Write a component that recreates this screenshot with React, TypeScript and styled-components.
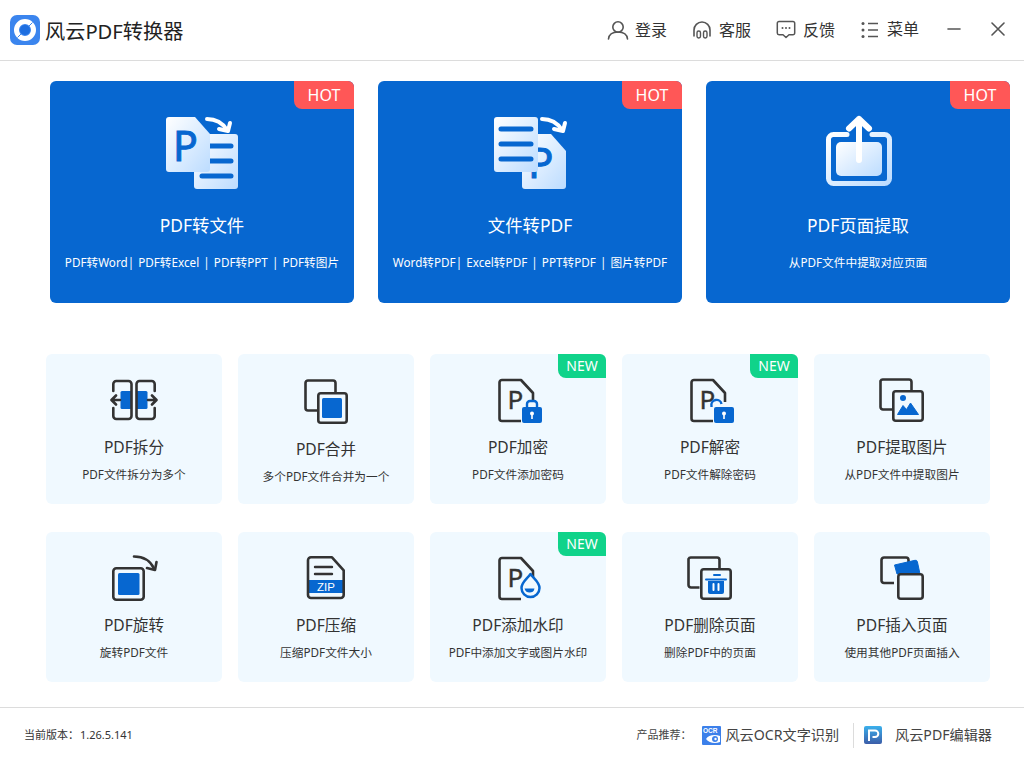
import React from "react";
import styled, { createGlobalStyle } from "styled-components";

const BLUE = "#0767d0";
const INK = "#333333";

const GlobalStyle = createGlobalStyle`
  html, body {
    margin: 0;
    padding: 0;
    background: #fff;
  }
  body {
    font-family: "Noto Sans", "Noto Sans CJK SC", sans-serif;
    color: ${INK};
  }
`;

const DocOutline = () => (
  <>
    <path
      d="M27 45H8a2.5 2.5 0 0 1-2.5-2.5V6.5A2.5 2.5 0 0 1 8 4h19l12 13v9"
      fill="none"
      stroke={INK}
      strokeWidth="2.6"
      strokeLinejoin="round"
    />
    <text x="13.5" y="33" fontSize="26" fill={INK} stroke={INK} strokeWidth="0.4" fontFamily="Noto Sans, sans-serif">
      P
    </text>
  </>
);

const BigGradient = ({ id }: { id: string }) => (
  <defs>
    <linearGradient id={id} x1="0" y1="0" x2="1" y2="1">
      <stop offset="0" stopColor="#ffffff" />
      <stop offset="1" stopColor="#bcdcff" />
    </linearGradient>
  </defs>
);

const BigArrow = ({ x }: { x: number }) => (
  <g transform={`translate(${x} 0)`} fill="none" stroke="#fff" strokeWidth="4" strokeLinecap="round" strokeLinejoin="round">
    <path d="M2 6c8 0 15 3 20 11" />
    <path d="M14 16l9 2 2-8" />
  </g>
);

const PdfToFileIcon = () => (
  <svg width="80" height="80" viewBox="0 0 80 80">
    <BigGradient id="pf" />
    <BigArrow x={43} />
    <rect x="32" y="21" width="44" height="55" rx="3" fill="url(#pf)" />
    <path d="M40 33h29M48 48h21M40 63h29" stroke={BLUE} strokeWidth="5" strokeLinecap="round" />
    <path d="M7 4h26l15 17v35a3 3 0 0 1-3 3H7a3 3 0 0 1-3-3V7a3 3 0 0 1 3-3z" fill="url(#pf)" />
    <text x="11" y="48" fontSize="41" fill={BLUE} stroke={BLUE} strokeWidth="1" fontFamily="Noto Sans, sans-serif">
      P
    </text>
  </svg>
);

const FileToPdfIcon = () => (
  <svg width="80" height="80" viewBox="0 0 80 80">
    <BigGradient id="fp" />
    <BigArrow x={50} />
    <path d="M35 21h26l15 17v35a3 3 0 0 1-3 3H35a3 3 0 0 1-3-3V24a3 3 0 0 1 3-3z" fill="url(#fp)" />
    <text x="38" y="65" fontSize="42" fill={BLUE} stroke={BLUE} strokeWidth="1" fontFamily="Noto Sans, sans-serif">
      P
    </text>
    <rect x="4" y="4" width="44" height="55" rx="3" fill="url(#fp)" />
    <path d="M11 16h30M11 31h30M11 46h30" stroke={BLUE} strokeWidth="5" strokeLinecap="round" />
  </svg>
);

const ExtractPageIcon = () => (
  <svg width="80" height="80" viewBox="0 0 80 80">
    <BigGradient id="ep" />
    <path
      d="M29 21.500H15.500a5 5 0 0 0-5 5V65.500a5 5 0 0 0 5 5H66.500a5 5 0 0 0 5-5V26.500a5 5 0 0 0-5-5H54"
      fill="none"
      stroke="url(#ep)"
      strokeWidth="5"
      strokeLinecap="round"
    />
    <rect x="18" y="29" width="46" height="34" rx="5" fill="url(#ep)" />
    <path d="M41 47V6M31 15.500L41 6l10 9.500" fill="none" stroke="#fff" strokeWidth="6" strokeLinecap="round" strokeLinejoin="round" />
  </svg>
);

const SplitIcon = () => (
  <svg width="48" height="48" viewBox="0 0 48 48">
    <rect x="10.500" y="15" width="11.500" height="18" rx="1.500" fill={BLUE} />
    <rect x="26" y="15" width="11.500" height="18" rx="1.500" fill={BLUE} />
    <g fill="none" stroke={INK} strokeWidth="2.600" strokeLinecap="round" strokeLinejoin="round">
      <path d="M3.300 15V8a3 3 0 0 1 3-3H18.500a3 3 0 0 1 3 3V40a3 3 0 0 1-3 3H6.300a3 3 0 0 1-3-3V32" />
      <path d="M44.700 15V8a3 3 0 0 0-3-3H29.500a3 3 0 0 0-3 3V40a3 3 0 0 0 3 3H41.700a3 3 0 0 0 3-3V32" />
      <path d="M10 24H2M6 19.500L1.500 24 6 28.500" />
      <path d="M38 24h8M42 19.500L46.500 24 42 28.500" />
    </g>
  </svg>
);

const MergeIcon = () => (
  <svg width="48" height="48" viewBox="0 0 48 48">
    <g fill="none" stroke={INK} strokeWidth="2.600">
      <path d="M15 34.500H6a2.500 2.500 0 0 1-2.500-2.500V7A2.500 2.500 0 0 1 6 4.500H31A2.500 2.500 0 0 1 33.500 7v9" />
      <rect x="16.300" y="17.300" width="28.400" height="29.400" rx="2.500" />
    </g>
    <rect x="20" y="22" width="20" height="20" rx="1.500" fill={BLUE} />
  </svg>
);

const LockBody = () => (
  <>
    <rect x="28" y="31" width="20" height="16" rx="2" fill={BLUE} />
    <circle cx="38" cy="37.500" r="2" fill="#fff" />
    <rect x="37.200" y="38" width="1.600" height="5" fill="#fff" />
  </>
);

const EncryptIcon = () => (
  <svg width="48" height="48" viewBox="0 0 48 48">
    <DocOutline />
    <path d="M33 31v-3a3 3 0 0 1 3-3h4a3 3 0 0 1 3 3v3" fill="#f0f9ff" stroke={BLUE} strokeWidth="2.400" />
    <LockBody />
  </svg>
);

const DecryptIcon = () => (
  <svg width="48" height="48" viewBox="0 0 48 48">
    <DocOutline />
    <path d="M25.500 31v-1a5 5 0 0 1 10-2" fill="none" stroke={BLUE} strokeWidth="2.400" />
    <LockBody />
  </svg>
);

const ExtractImageIcon = () => (
  <svg width="48" height="48" viewBox="0 0 48 48">
    <g fill="none" stroke={INK} strokeWidth="2.600">
      <path d="M14 33.500H5a2.500 2.500 0 0 1-2.500-2.500V5A2.500 2.500 0 0 1 5 3.500H31A2.500 2.500 0 0 1 33.500 6v9" />
      <rect x="15.300" y="15.300" width="29.400" height="29.400" rx="2.500" />
    </g>
    <circle cx="25" cy="22" r="3" fill={BLUE} />
    <path d="M19.500 38.500l5.500-9 3.500 4 4-6.500 8 11.500z" fill={BLUE} stroke={BLUE} strokeLinejoin="round" />
  </svg>
);

const RotateIcon = () => (
  <svg width="48" height="48" viewBox="0 0 48 48">
    <rect x="3.300" y="14.300" width="30.400" height="31.400" rx="3" fill="none" stroke={INK} strokeWidth="2.600" />
    <rect x="8" y="19" width="21.500" height="22" rx="1.500" fill={BLUE} />
    <path d="M24 2.500c8 0 16 3.500 20 12" fill="none" stroke={INK} strokeWidth="2.600" strokeLinecap="round" />
    <path d="M37 14l8 2 1.500-8" fill="none" stroke={INK} strokeWidth="2.600" strokeLinecap="round" strokeLinejoin="round" />
  </svg>
);

const ZipIcon = () => (
  <svg width="48" height="48" viewBox="0 0 48 48">
    <rect x="6" y="26" width="36" height="13" fill={BLUE} />
    <path
      d="M9 3.300H30l11.700 13V41a3 3 0 0 1-3 3H9a3 3 0 0 1-3-3V6.300a3 3 0 0 1 3-3z"
      fill="none"
      stroke={INK}
      strokeWidth="2.600"
      strokeLinejoin="round"
    />
    <path d="M13 13h17M13 20h17" stroke={INK} strokeWidth="2.400" strokeLinecap="round" />
    <text x="24" y="37" textAnchor="middle" fontSize="11.500" fill="#fff" fontFamily="Liberation Sans, sans-serif">
      ZIP
    </text>
  </svg>
);

const WatermarkIcon = () => (
  <svg width="48" height="48" viewBox="0 0 48 48">
    <DocOutline />
    <path
      d="M36.500 20c3 4.500 9 8 9 14a9 9 0 0 1-18 0c0-6 6-9.500 9-14z"
      fill="#f0f9ff"
      stroke={BLUE}
      strokeWidth="2.500"
      strokeLinejoin="round"
    />
    <path d="M30.500 34.500h10c-.5 3-2.500 4-5 4s-4-1-5-4z" fill={BLUE} />
  </svg>
);

const DeleteIcon = () => (
  <svg width="48" height="48" viewBox="0 0 48 48">
    <g fill="none" stroke={INK} strokeWidth="2.600">
      <path d="M13.500 33.500H5a2.500 2.500 0 0 1-2.500-2.500V5A2.500 2.500 0 0 1 5 3.500H31A2.500 2.500 0 0 1 33.500 6v9" />
      <rect x="15.300" y="15.300" width="29.400" height="29.400" rx="2.500" />
    </g>
    <rect x="27" y="20" width="8" height="2" rx="1" fill={BLUE} />
    <rect x="19" y="24.500" width="22" height="2" rx="1" fill={BLUE} />
    <path d="M22 27h16v11a2 2 0 0 1-2 2H24a2 2 0 0 1-2-2z" fill={BLUE} />
    <path d="M27.500 30v6M32.500 30v6" stroke="#fff" strokeWidth="2" strokeLinecap="round" />
  </svg>
);

const InsertIcon = () => (
  <svg width="48" height="48" viewBox="0 0 48 48">
    <path
      d="M15 28H5a2.500 2.500 0 0 1-2.500-2.500V5A2.500 2.500 0 0 1 5 2.500H27A2.500 2.500 0 0 1 29.500 5v3"
      fill="none"
      stroke={INK}
      strokeWidth="2.600"
      transform="translate(1 1)"
    />
    <path d="M16.500 11l20.500-4.700a2 2 0 0 1 2.400 1.500L42 20H19z" fill={BLUE} stroke={BLUE} strokeLinejoin="round" />
    <rect x="20.300" y="20.300" width="24.400" height="24.400" rx="2.500" fill="#f0f9ff" stroke={INK} strokeWidth="2.600" />
  </svg>
);

const AppLogo = () => (
  <svg width="30" height="30" viewBox="0 0 30 30">
    <rect width="30" height="30" rx="7" fill="#3b85ee" />
    <circle cx="15" cy="15" r="8.500" fill="none" stroke="#fff" strokeWidth="5" />
    <circle cx="15" cy="15" r="5" fill="#1f6fe0" />
    <path d="M19 11l3.500-3.500M11 19l-3.500 3.500" stroke="#3b85ee" strokeWidth="1" />
  </svg>
);

const UserIcon = () => (
  <svg width="22" height="20" viewBox="0 0 22 20">
    <circle cx="11" cy="7" r="5.200" fill="none" stroke="#555" strokeWidth="1.600" />
    <path d="M1.500 19c.5-5 4-7 9.500-7s9 2 9.500 7" fill="none" stroke="#555" strokeWidth="1.600" strokeLinecap="round" />
  </svg>
);

const HeadsetIcon = () => (
  <svg width="20" height="20" viewBox="0 0 20 20">
    <path d="M2 16V10a8 8 0 0 1 16 0v6" fill="none" stroke="#555" strokeWidth="1.600" strokeLinecap="round" />
    <rect x="5" y="11" width="3.500" height="7" rx="1.700" fill="none" stroke="#555" strokeWidth="1.400" />
    <rect x="11.500" y="11" width="3.500" height="7" rx="1.700" fill="none" stroke="#555" strokeWidth="1.400" />
  </svg>
);

const FeedbackIcon = () => (
  <svg width="20" height="20" viewBox="0 0 20 20">
    <path
      d="M3 1.500H17a1.700 1.700 0 0 1 1.700 1.700V13a1.700 1.700 0 0 1-1.700 1.700H13L10 17.500 7 14.700H3A1.700 1.700 0 0 1 1.300 13V3.200A1.700 1.700 0 0 1 3 1.500z"
      fill="none"
      stroke="#555"
      strokeWidth="1.500"
      strokeLinejoin="round"
    />
    <circle cx="6.500" cy="8" r="1" fill="#555" />
    <circle cx="10" cy="8" r="1" fill="#555" />
    <circle cx="13.500" cy="8" r="1" fill="#555" />
  </svg>
);

const MenuIcon = () => (
  <svg width="18" height="18" viewBox="0 0 18 18">
    <circle cx="2" cy="2.500" r="1.500" fill="#555" />
    <circle cx="2" cy="9" r="1.500" fill="#555" />
    <circle cx="2" cy="15.500" r="1.500" fill="#555" />
    <path d="M7 2.500h10M7 9h10M7 15.500h10" stroke="#555" strokeWidth="1.400" />
  </svg>
);

const MinimizeIcon = () => (
  <svg width="14" height="14" viewBox="0 0 14 14">
    <path d="M1 7h12" stroke="#555" strokeWidth="1.600" strokeLinecap="round" />
  </svg>
);

const CloseIcon = () => (
  <svg width="14" height="14" viewBox="0 0 14 14">
    <path d="M1 1l12 12M13 1L1 13" stroke="#555" strokeWidth="1.600" strokeLinecap="round" />
  </svg>
);

const OcrLogo = () => (
  <svg width="19" height="19" viewBox="0 0 19 19">
    <rect width="19" height="19" rx="1" fill="#3c80ea" />
    <text x="1" y="7" fontSize="6.500" fontWeight="700" fill="#fff" fontFamily="Liberation Sans, sans-serif">
      OCR
    </text>
    <path d="M4 13c2-4 9-5 14-3v6c-5 2-11 1-14-3z" fill="#fff" />
    <circle cx="13" cy="13" r="3" fill="#3c80ea" />
    <circle cx="13.500" cy="13" r="1.200" fill="#fff" />
  </svg>
);

const EditorLogo = () => (
  <svg width="18" height="18" viewBox="0 0 18 18">
    <defs>
      <linearGradient id="ed" x1="0" y1="0" x2="0" y2="1">
        <stop offset="0" stopColor="#3ab0ec" />
        <stop offset="1" stopColor="#3c5da8" />
      </linearGradient>
    </defs>
    <rect width="18" height="18" rx="2" fill="url(#ed)" />
    <path d="M5 15V4.500h6a3.300 3.300 0 0 1 0 6.600H8.500" fill="none" stroke="#fff" strokeWidth="2" />
  </svg>
);

const heroCards = [
  { title: "PDF转文件", desc: "PDF转Word|  PDF转Excel  |  PDF转PPT  |  PDF转图片", icon: <PdfToFileIcon /> },
  { title: "文件转PDF", desc: "Word转PDF|  Excel转PDF  |  PPT转PDF  |  图片转PDF", icon: <FileToPdfIcon /> },
  { title: "PDF页面提取", desc: "从PDF文件中提取对应页面", icon: <ExtractPageIcon /> },
];

const toolCards = [
  { title: "PDF拆分", desc: "PDF文件拆分为多个", icon: <SplitIcon /> },
  { title: "PDF合并", desc: "多个PDF文件合并为一个", icon: <MergeIcon />, lower: true },
  { title: "PDF加密", desc: "PDF文件添加密码", icon: <EncryptIcon />, isNew: true },
  { title: "PDF解密", desc: "PDF文件解除密码", icon: <DecryptIcon />, isNew: true },
  { title: "PDF提取图片", desc: "从PDF文件中提取图片", icon: <ExtractImageIcon /> },
  { title: "PDF旋转", desc: "旋转PDF文件", icon: <RotateIcon /> },
  { title: "PDF压缩", desc: "压缩PDF文件大小", icon: <ZipIcon /> },
  { title: "PDF添加水印", desc: "PDF中添加文字或图片水印", icon: <WatermarkIcon />, isNew: true },
  { title: "PDF删除页面", desc: "删除PDF中的页面", icon: <DeleteIcon /> },
  { title: "PDF插入页面", desc: "使用其他PDF页面插入", icon: <InsertIcon /> },
];

const App = () => {
  return (
    <Page>
      <GlobalStyle />
      <Header>
        <Brand>
          <AppLogo />
          <BrandName>风云PDF转换器</BrandName>
        </Brand>
        <NavItems>
          <NavItem $width={85} $gap={6}>
            <UserIcon />
            <span>登录</span>
          </NavItem>
          <NavItem $width={84}>
            <HeadsetIcon />
            <span>客服</span>
          </NavItem>
          <NavItem $width={85}>
            <FeedbackIcon />
            <span>反馈</span>
          </NavItem>
          <NavItem $width={86} $gap={8} $raised>
            <MenuIcon />
            <span>菜单</span>
          </NavItem>
          <WindowButton $width={44}>
            <MinimizeIcon />
          </WindowButton>
          <WindowButton $width={33}>
            <CloseIcon />
          </WindowButton>
        </NavItems>
      </Header>

      <HeroRow>
        {heroCards.map((card) => (
          <HeroCard key={card.title}>
            <HotBadge>HOT</HotBadge>
            {card.icon}
            <HeroTitle>{card.title}</HeroTitle>
            <HeroDesc>{card.desc}</HeroDesc>
          </HeroCard>
        ))}
      </HeroRow>

      <ToolGrid>
        {toolCards.map((card) => (
          <ToolCard key={card.title}>
            {card.isNew && <NewBadge>NEW</NewBadge>}
            {card.icon}
            <ToolTitle $lower={card.lower}>{card.title}</ToolTitle>
            <ToolDesc>{card.desc}</ToolDesc>
          </ToolCard>
        ))}
      </ToolGrid>

      <Footer>
        <Version>
          当前版本：<VersionNumber>1.26.5.141</VersionNumber>
        </Version>
        <Products>
          <ProductLabel>产品推荐：</ProductLabel>
          <ProductLink $gap={4}>
            <OcrLogo />
            风云OCR文字识别
          </ProductLink>
          <Divider />
          <ProductLink $gap={13}>
            <EditorLogo />
            风云PDF编辑器
          </ProductLink>
        </Products>
      </Footer>
    </Page>
  );
};

export default App;

const Page = styled.div`
  width: 1024px;
  height: 762px;
  display: flex;
  flex-direction: column;
  overflow: hidden;
  background: #fff;
`;

const Header = styled.header`
  height: 60px;
  flex-shrink: 0;
  display: flex;
  justify-content: space-between;
  align-items: center;
  padding: 0 0 0 10px;
  border-bottom: 1px solid #dcdcdc;
`;

const Brand = styled.div`
  display: flex;
  align-items: center;
  gap: 5px;
`;

const BrandName = styled.div`
  font-size: 20.2px;
  line-height: 30px;
  color: #222;
  margin-top: 2px;
`;

const NavItems = styled.nav`
  display: flex;
  align-items: center;
`;

const NavItem = styled.div<{ $width: number; $gap?: number; $raised?: boolean }>`
  width: ${({ $width }) => $width}px;
  display: flex;
  align-items: center;
  gap: ${({ $gap }) => $gap ?? 7}px;
  font-size: 16px;
  line-height: 24px;
  color: #333;

  span {
    position: relative;
    top: ${({ $raised }) => ($raised ? "-1px" : "0")};
  }
`;

const WindowButton = styled.div<{ $width: number }>`
  width: ${({ $width }) => $width}px;
  display: flex;
  justify-content: flex-start;
  align-items: center;
  margin-bottom: 2px;
`;

const HeroRow = styled.section`
  display: flex;
  gap: 24px;
  padding: 20px 0 0 50px;
`;

const HeroCard = styled.div`
  position: relative;
  width: 304px;
  height: 222px;
  box-sizing: border-box;
  padding-top: 32px;
  border-radius: 6px;
  background: ${BLUE};
  color: #fff;
  display: flex;
  flex-direction: column;
  align-items: center;

  svg {
    flex-shrink: 0;
  }
`;

const HotBadge = styled.div`
  position: absolute;
  top: 0;
  right: 0;
  width: 60px;
  height: 28px;
  border-radius: 0 6px 0 8px;
  background: #ff5757;
  color: #fff;
  font-size: 16px;
  line-height: 28px;
  text-align: center;
`;

const HeroTitle = styled.div`
  margin-top: 20px;
  font-size: 17.4px;
  line-height: 24px;
`;

const HeroDesc = styled.div`
  margin-top: 17px;
  font-size: 11.7px;
  line-height: 16px;
  white-space: pre;
  word-spacing: -1px;
`;

const ToolGrid = styled.section`
  display: grid;
  grid-template-columns: repeat(5, 176px);
  grid-auto-rows: 150px;
  column-gap: 16px;
  row-gap: 28px;
  padding: 51px 0 0 46px;
`;

const ToolCard = styled.div`
  position: relative;
  box-sizing: border-box;
  padding-top: 22px;
  border-radius: 6px;
  background: #f0f9ff;
  display: flex;
  flex-direction: column;
  align-items: center;

  svg {
    flex-shrink: 0;
  }
`;

const NewBadge = styled.div`
  position: absolute;
  top: 0;
  right: 0;
  width: 48px;
  height: 24px;
  border-radius: 0 6px 0 8px;
  background: #10d38a;
  color: #fff;
  font-size: 14px;
  line-height: 24px;
  text-align: center;
`;

const ToolTitle = styled.div<{ $lower?: boolean }>`
  margin-top: ${({ $lower }) => ($lower ? 14 : 12)}px;
  font-size: 15.6px;
  line-height: 22px;
  color: #333;
`;

const ToolDesc = styled.div`
  margin-top: 8px;
  font-size: 11.7px;
  line-height: 16px;
  color: #333;
`;

const Footer = styled.footer`
  margin-top: 25px;
  flex: 1;
  display: flex;
  justify-content: space-between;
  align-items: center;
  padding: 0 32px 0 24px;
  border-top: 1px solid #dcdcdc;
`;

const Version = styled.div`
  font-size: 11px;
  line-height: 16px;
  color: #333;
`;

const VersionNumber = styled.span`
  margin-left: 1px;
`;

const Products = styled.div`
  display: flex;
  align-items: center;
`;

const ProductLabel = styled.div`
  width: 66px;
  font-size: 11px;
  line-height: 16px;
  color: #444;
`;

const ProductLink = styled.div<{ $gap: number }>`
  display: flex;
  align-items: center;
  gap: ${({ $gap }) => $gap}px;
  font-size: 14.15px;
  line-height: 20px;
  color: #444;
`;

const Divider = styled.div`
  width: 1px;
  height: 25px;
  margin: 0 10px 0 14px;
  background: #dcdcdc;
`;
